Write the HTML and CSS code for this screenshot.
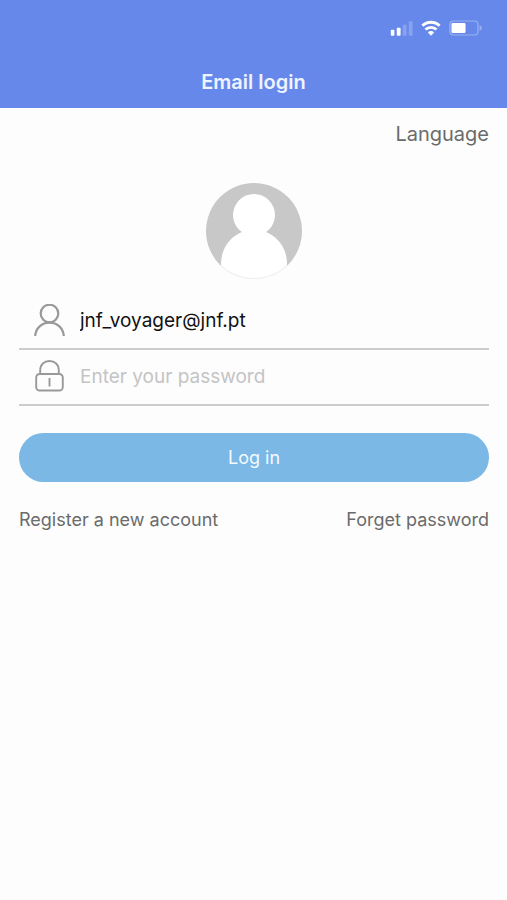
FILE: index.html
```
<!DOCTYPE html>
<html lang="en">
<head>
<meta charset="utf-8">
<meta name="viewport" content="width=device-width, initial-scale=1">
<title>Email login</title>
<link rel="stylesheet" href="styles.css">
</head>
<body>
<header class="topbar">
  <div class="status">
    <svg class="status-icon" width="23" height="16" viewBox="0 0 23 16" aria-hidden="true">
      <rect x="0.8" y="9.8" width="3.6" height="6" rx="0.8" fill="#fff"/>
      <rect x="6.8" y="7.8" width="3.8" height="8" rx="0.8" fill="#fff"/>
      <rect x="12.8" y="4.8" width="3.8" height="11" rx="0.8" fill="#fff" opacity=".22"/>
      <rect x="18.8" y="1.3" width="3.8" height="14.5" rx="0.8" fill="#fff" opacity=".22"/>
    </svg>
    <svg class="status-icon" width="20" height="16" viewBox="0 0 20 16" fill="none" stroke="#fff" stroke-width="2.8" aria-hidden="true">
      <path d="M1.4 5.8a12.2 12.2 0 0 1 17.2 0"/>
      <path d="M4.5 9.6a7.8 7.8 0 0 1 11 0"/>
      <path d="M10 15.7 6.9 12.4a4.4 4.4 0 0 1 6.2 0z" fill="#fff" stroke="none"/>
    </svg>
    <svg class="status-icon" width="34" height="16" viewBox="0 0 34 16" aria-hidden="true">
      <rect x="0.9" y="1" width="28" height="14" rx="3.5" fill="none" stroke="#fff" stroke-width="1.2" opacity=".35"/>
      <rect x="2.5" y="3" width="14" height="10" rx="1.2" fill="#fff"/>
      <path d="M30.5 5.2c3 1.2 3 4.4 0 5.6z" fill="#fff" opacity=".35"/>
    </svg>
  </div>
  <h1 class="title">Email login</h1>
</header>
<main class="page">
  <a class="language" href="#language">Language</a>
  <svg class="avatar" width="98" height="98" viewBox="0 0 98 98" role="img" aria-label="Profile picture">
    <clipPath id="disc"><circle cx="49" cy="49" r="48"/></clipPath>
    <g clip-path="url(#disc)">
      <rect width="98" height="98" fill="#c8c8c8"/>
      <circle cx="49" cy="33" r="21" fill="#fff"/>
      <path d="M16 98V82c0-18 13-34 33-34s33 16 33 34v16z" fill="#fff"/>
    </g>
    <path d="M16 83.5a48 48 0 0 0 66 0" fill="none" stroke="#f0f0f0" stroke-width="1"/>
  </svg>
  <form class="form">
    <div class="field">
      <label class="field-icon" for="email" aria-label="Email">
        <svg width="32" height="34" viewBox="0 0 32 34" fill="none" stroke="#999" stroke-width="2.2" aria-hidden="true">
          <circle cx="15.5" cy="9.5" r="8.8"/>
          <path d="M1.2 32c.6-8 6.6-13.3 14.3-13.3S29.2 24 29.8 32"/>
        </svg>
      </label>
      <input class="input" id="email" type="email" value="jnf_voyager@jnf.pt">
    </div>
    <div class="field">
      <label class="field-icon" for="password" aria-label="Password">
        <svg width="32" height="34" viewBox="0 0 32 34" fill="none" stroke="#999" stroke-width="1.9" aria-hidden="true">
          <rect x="2.2" y="14" width="26.600" height="16.5" rx="3.5"/>
          <path d="M6.2 14V10c0-5.500 4-9 9.300-9s9.300 3.500 9.300 9v4"/>
          <path d="M15.5 18v8.5"/>
        </svg>
      </label>
      <input class="input" id="password" type="password" placeholder="Enter your password">
    </div>
    <button class="login" type="button">Log in</button>
  </form>
  <nav class="links">
    <a href="#register">Register a new account</a>
    <a href="#forgot">Forget password</a>
  </nav>
</main>
</body>
</html>
```
FILE: styles.css
```
* {
  box-sizing: border-box;
}

body {
  margin: 0;
  min-height: 100vh;
  background: #fdfdfd;
  color: #6b6b6b;
  font-family: Inter, "Liberation Sans", sans-serif;
  font-size: 18px;
  line-height: 24px;
}

a {
  color: inherit;
  text-decoration: none;
}

.topbar {
  padding: 20px 24px 14px;
  background: #6688ea;
  color: #eef4ff;
}

.status {
  display: flex;
  justify-content: flex-end;
  gap: 8px;
  height: 16px;
}

.status-icon {
  display: block;
}

.title {
  margin: 34px 0 0;
  font-size: 20px;
  line-height: 24px;
  font-weight: 600;
  text-align: center;
}

.page {
  display: flex;
  flex-direction: column;
  padding: 14px 18px 24px 19px;
}

.language {
  align-self: flex-end;
  font-size: 20px;
}

.avatar {
  align-self: center;
  margin-top: 36px;
}

.form {
  display: flex;
  flex-direction: column;
  margin-top: 14px;
}

.field {
  display: flex;
  align-items: center;
  height: 56px;
  padding-left: 15px;
  border-bottom: 2px solid #ccc;
}

.field-icon {
  display: flex;
}

.input {
  flex: 1;
  min-width: 0;
  margin-left: 14px;
  padding: 0;
  border: 0;
  outline: 0;
  background: none;
  color: #111;
  font: inherit;
  font-size: 19px;
}

.input::placeholder {
  color: #c4c4c4;
  opacity: 1;
}

.login {
  height: 49px;
  margin-top: 27px;
  border: 0;
  border-radius: 25px;
  background: #7bb8e6;
  color: #f4faff;
  font: inherit;
}

.links {
  display: flex;
  justify-content: space-between;
  margin-top: 26px;
}
```
